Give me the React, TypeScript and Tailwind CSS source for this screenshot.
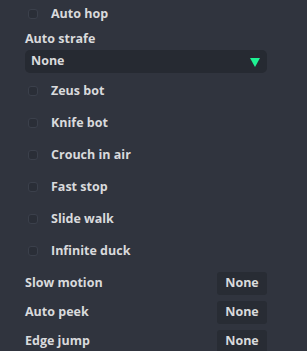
import React from "react";

const Check = ({ label }: { label: string }) => (
  <div className="flex h-[32px] items-center">
    <div className="ml-[3px] h-[10px] w-[10px] rounded-[3px] border border-[#3b404b] bg-[#2a2e37]" />
    <span className="ml-[13px] text-[12.5px] font-bold leading-none text-[#d9dadc]">{label}</span>
  </div>
);

const KeyRow = ({ label }: { label: string }) => (
  <div className="flex h-[29px] items-center justify-between">
    <span className="text-[12.5px] font-bold leading-none text-[#d9dadc]">{label}</span>
    <div className="flex h-[23px] w-[50px] items-center justify-center rounded-[3px] bg-[#282c34] text-[12.5px] font-bold text-[#d9dadc]">
      None
    </div>
  </div>
);

export default function App() {
  return (
    <div
      className="h-[351px] w-[307px] overflow-hidden bg-[#30343e] pl-[25px] pr-[40px]"
      style={{ fontFamily: '"Open Sans", "Noto Sans", sans-serif' }}
    >
      <div className="flex h-[28px] items-center">
        <div className="ml-[3px] h-[10px] w-[10px] rounded-[3px] border border-[#3b404b] bg-[#2a2e37]" />
        <span className="ml-[13px] text-[12.5px] font-bold leading-none text-[#d9dadc]">Auto hop</span>
      </div>
      <div className="flex h-[22px] items-center">
        <span className="text-[12.5px] font-bold leading-none text-[#d9dadc]">Auto strafe</span>
      </div>
      <div className="flex h-[23px] items-center justify-between rounded-[5px] bg-[#262a32] pl-[6px] pr-[6px]">
        <span className="text-[12.5px] font-bold leading-none text-[#d9dadc]">None</span>
        <svg width="10" height="9" viewBox="0 0 10 9" className="mr-[1px] mt-[1px]">
          <polygon points="0,0 10,0 5,9" fill="#1ef293" />
        </svg>
      </div>
      <div className="mt-[2px]">
        <Check label="Zeus bot" />
        <Check label="Knife bot" />
        <Check label="Crouch in air" />
        <Check label="Fast stop" />
        <Check label="Slide walk" />
        <Check label="Infinite duck" />
      </div>
      <div className="mt-[2px]">
        <KeyRow label="Slow motion" />
        <KeyRow label="Auto peek" />
        <KeyRow label="Edge jump" />
      </div>
    </div>
  );
}
